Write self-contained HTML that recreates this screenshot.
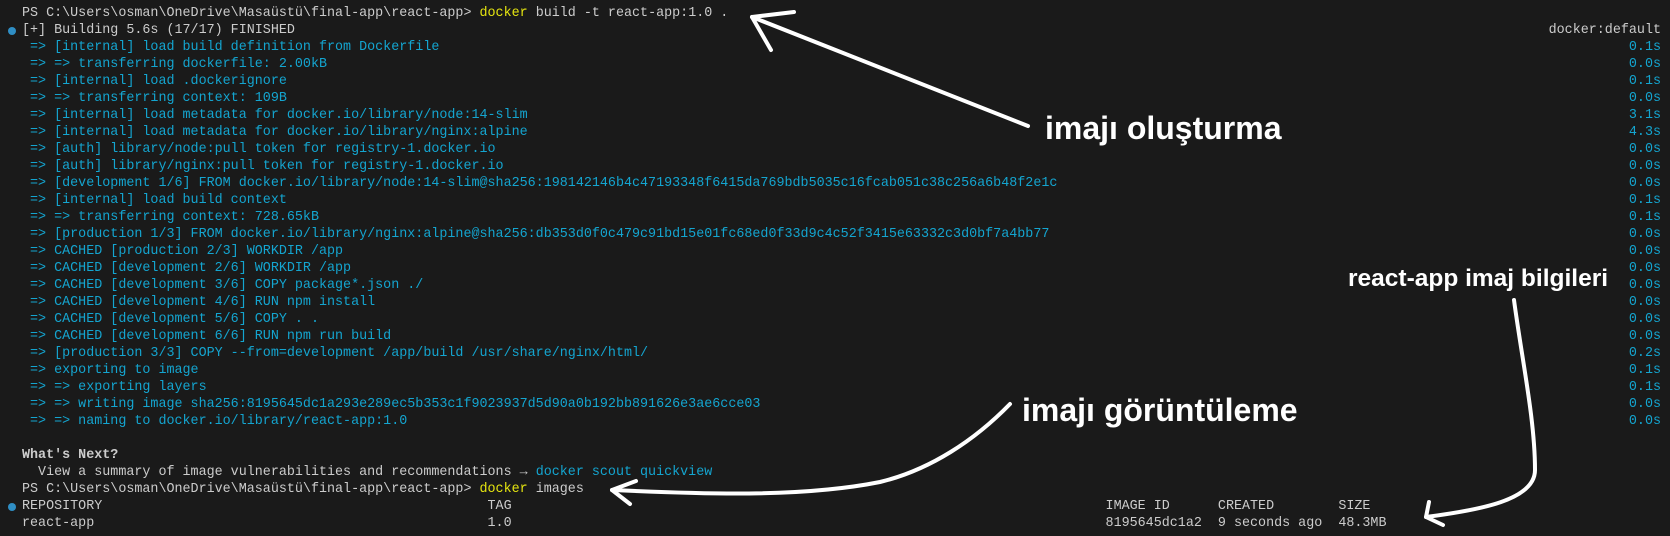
<!DOCTYPE html>
<html><head><meta charset="utf-8">
<style>
html,body{margin:0;padding:0;background:#1a1a1a;width:1670px;height:536px;overflow:hidden;position:relative}
.t{position:absolute;left:22px;top:5px;font-family:"Liberation Mono",monospace;font-size:13.38px;line-height:17px;color:#cccccc;white-space:pre;margin:0}
.c{color:#14a5d0}
.y{color:#e5e510}
.b{font-weight:bold}
.r{position:absolute;right:9px;top:5px;font-family:"Liberation Mono",monospace;font-size:13.38px;line-height:17px;color:#14a5d0;white-space:pre;text-align:right;margin:0}
.dot{position:absolute;width:8px;height:8px;border-radius:50%;background:#2f8ec4;left:8px}
.a{position:absolute;font-family:"Liberation Sans",sans-serif;font-weight:bold;color:#fff;white-space:nowrap;line-height:1}
svg{position:absolute;left:0;top:0}
</style></head><body>
<pre class="t">PS C:\Users\osman\OneDrive\Masaüstü\final-app\react-app&gt; <span class="y">docker</span> build -t react-app:1.0 .
[+] Building 5.6s (17/17) FINISHED
<span class="c"> =&gt; [internal] load build definition from Dockerfile
 =&gt; =&gt; transferring dockerfile: 2.00kB
 =&gt; [internal] load .dockerignore
 =&gt; =&gt; transferring context: 109B
 =&gt; [internal] load metadata for docker.io/library/node:14-slim
 =&gt; [internal] load metadata for docker.io/library/nginx:alpine
 =&gt; [auth] library/node:pull token for registry-1.docker.io
 =&gt; [auth] library/nginx:pull token for registry-1.docker.io
 =&gt; [development 1/6] FROM docker.io/library/node:14-slim@sha256:198142146b4c47193348f6415da769bdb5035c16fcab051c38c256a6b48f2e1c
 =&gt; [internal] load build context
 =&gt; =&gt; transferring context: 728.65kB
 =&gt; [production 1/3] FROM docker.io/library/nginx:alpine@sha256:db353d0f0c479c91bd15e01fc68ed0f33d9c4c52f3415e63332c3d0bf7a4bb77
 =&gt; CACHED [production 2/3] WORKDIR /app
 =&gt; CACHED [development 2/6] WORKDIR /app
 =&gt; CACHED [development 3/6] COPY package*.json ./
 =&gt; CACHED [development 4/6] RUN npm install
 =&gt; CACHED [development 5/6] COPY . .
 =&gt; CACHED [development 6/6] RUN npm run build
 =&gt; [production 3/3] COPY --from=development /app/build /usr/share/nginx/html/
 =&gt; exporting to image
 =&gt; =&gt; exporting layers
 =&gt; =&gt; writing image sha256:8195645dc1a293e289ec5b353c1f9023937d5d90a0b192bb891626e3ae6cce03
 =&gt; =&gt; naming to docker.io/library/react-app:1.0</span>

<span class="b">What's Next?</span>
  View a summary of image vulnerabilities and recommendations → <span class="c">docker scout quickview</span>
PS C:\Users\osman\OneDrive\Masaüstü\final-app\react-app&gt; <span class="y">docker</span> images
REPOSITORY                                                TAG                                                                          IMAGE ID      CREATED        SIZE
react-app                                                 1.0                                                                          8195645dc1a2  9 seconds ago  48.3MB</pre>
<pre class="r">


0.1s
0.0s
0.1s
0.0s
3.1s
4.3s
0.0s
0.0s
0.0s
0.1s
0.1s
0.0s
0.0s
0.0s
0.0s
0.0s
0.0s
0.0s
0.2s
0.1s
0.1s
0.0s
0.0s</pre>
<pre class="r" style="color:#cccccc">

docker:default</pre>
<div class="dot" style="top:27px"></div>
<div class="dot" style="top:503px"></div>

<div class="a" style="left:1045px;top:112px;font-size:32px">imajı oluşturma</div>
<div class="a" style="left:1022px;top:394px;font-size:32px">imajı görüntüleme</div>
<div class="a" style="left:1348px;top:267px;font-size:24.5px">react-app imaj bilgileri</div>

<svg width="1670" height="536" viewBox="0 0 1670 536" fill="none" stroke="#fff" stroke-width="4" stroke-linecap="round" stroke-linejoin="round">
  <path d="M1028 126 L752 17"/>
  <path d="M794 12 L752 17 L771 50"/>
  <path d="M1010 404 C975 440 930 470 880 482 C800 498 700 494 612 490"/>
  <path d="M636 481 L612 490 L630 504"/>
  <path d="M1514 300 C1522 360 1535 420 1535 470 C1535 500 1480 510 1426 517"/>
  <path d="M1429 502 L1426 517 L1443 525"/>
</svg>
</body></html>
